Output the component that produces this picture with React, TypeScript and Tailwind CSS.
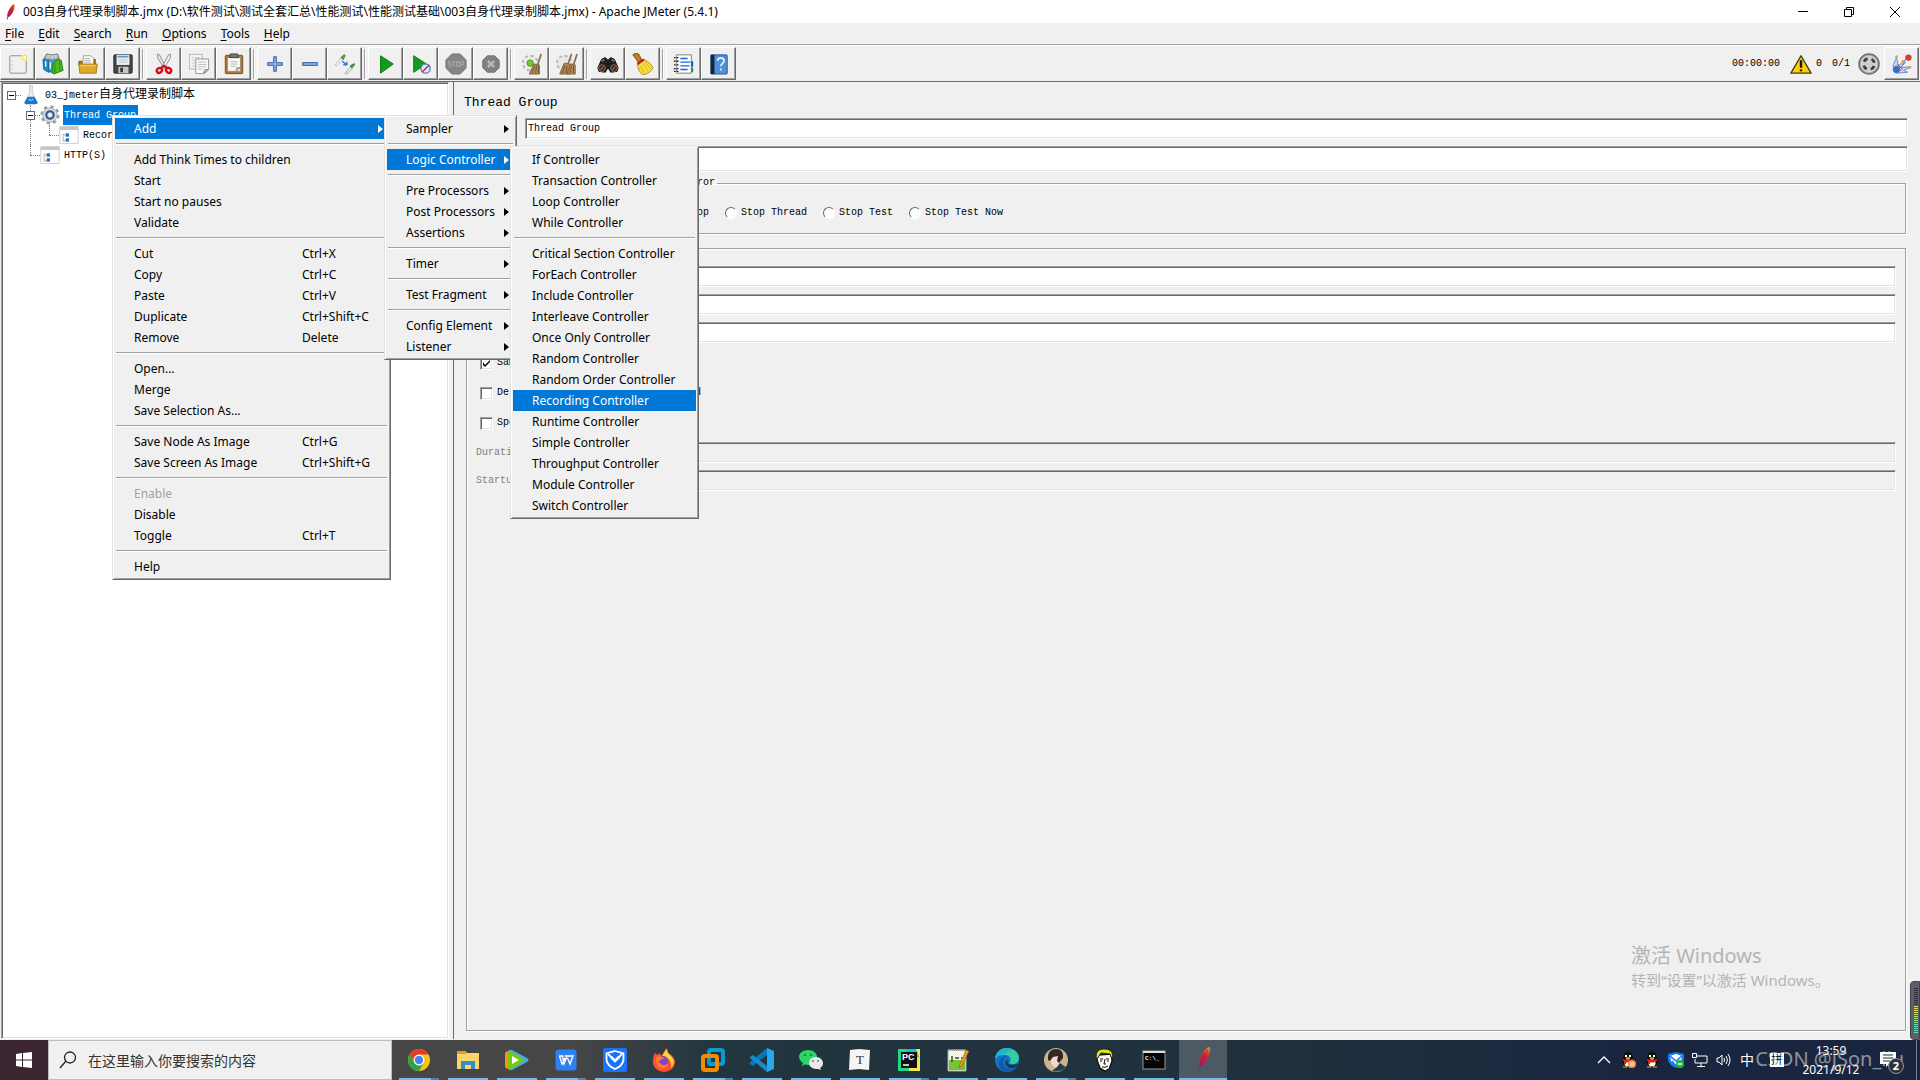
import React from 'react';
import clsx from 'clsx';

const UI_FONT = "font-['Noto_Sans','Noto_Sans_CJK_SC',sans-serif]";
const MONO_FONT = "font-['Liberation_Mono','Noto_Sans_CJK_SC',monospace]";

const POPUP =
  'border border-t-[#e3e3e3] border-l-[#e3e3e3] border-r-[#696969] border-b-[#696969] bg-[#f0f0f0] shadow-[inset_1px_1px_0_#fff,inset_-1px_-1px_0_#a0a0a0]';
const RAISED =
  'border border-t-white border-l-white border-r-[#696969] border-b-[#696969] bg-[#f0f0f0] shadow-[inset_-1px_-1px_0_#a0a0a0]';
const SUNKEN =
  'border border-t-[#a0a0a0] border-l-[#a0a0a0] border-r-white border-b-white shadow-[inset_1px_1px_0_#696969,inset_-1px_-1px_0_#e3e3e3]';

/* ---------- Icons ---------- */

type IconProps = { className?: string; children: React.ReactNode; box?: number };

const Svg = ({ className = 'size-6', box = 24, children }: IconProps) => (
  <svg className={clsx('shrink-0', className)} viewBox={`0 0 ${box} ${box}`} fill="none" aria-hidden="true">
    {children}
  </svg>
);

const Feather = ({ className }: { className?: string }) => (
  <Svg className={className}>
    <defs>
      <linearGradient id="feather" x1="19" y1="0" x2="8" y2="24" gradientUnits="userSpaceOnUse">
        <stop stopColor="#f79a23" />
        <stop offset=".35" stopColor="#d9222a" />
        <stop offset=".7" stopColor="#b11f5b" />
        <stop offset="1" stopColor="#672c8e" />
      </linearGradient>
    </defs>
    <path d="M18 0c2 1 1 5 0 8-1 4-4 9-7 11l-2 1-1 4-1-1 1-4c-1-3 1-8 4-13 2-3 4-6 6-6Z" fill="url(#feather)" />
    <path d="M17 2 9 19" stroke="#8c1d3f" strokeWidth=".6" />
  </Svg>
);

const icons: Record<string, React.ReactNode> = {
  new: (
    <>
      <rect x="3" y="3" width="18" height="19" rx="1" fill="#f0f0ee" stroke="#8a8c88" />
      <path d="M5.500 8v1M5.500 12v1M5.500 17v1" stroke="#999" />
      <circle cx="19" cy="5" r="4" fill="#fdf39a" opacity=".8" />
      <circle cx="19" cy="5" r="2.300" fill="#fff" stroke="#eadb45" />
    </>
  ),
  templates: (
    <>
      <path d="M1 7 7 5l4 2v13l-4 1-5-3Z" fill="#1c90c8" stroke="#0c6390" />
      <path d="m7 7 5-3 6 2v10l-6 6-5-3Z" fill="#3da2d0" stroke="#11688f" />
      <path d="m2 6 3-5 6 1 6-1 2 5-8 2Z" fill="#b5babb" stroke="#73797b" />
      <path d="m6 5 2-3M11 6l1-4M15 5V2" stroke="#eceeee" />
      <path d="m12 11 6-4 3 1 2 11-10 4-2-2Z" fill="#47bb22" stroke="#237d0c" />
      <path d="M14 11v11M19 8l1 12" stroke="#2a8f12" />
      <path d="M4 9v6M9 10v7" stroke="#e8f6fc" strokeWidth="1.500" />
    </>
  ),
  open: (
    <>
      <path d="M2 9h5l2-2h11v6H2Z" fill="#a97710" stroke="#875c07" />
      <path d="M7 3h8l3 3v9H6Z" fill="#fff" stroke="#9a9a9a" />
      <path d="M8 6h6M8 8h7M8 10h7" stroke="#aaa" />
      <path d="M2 12h20l-1 10H3Z" fill="#dfa72d" stroke="#a77b16" />
      <path d="M4 14h16" stroke="#f8d77a" />
    </>
  ),
  save: (
    <>
      <rect x="2" y="2" width="20" height="20" rx="1" fill="#424548" stroke="#25282b" />
      <rect x="5" y="2" width="14" height="11" fill="#eef3f8" />
      <path d="M6 4h12" stroke="#6195d4" strokeWidth="2" />
      <path d="M7 7.500h10M7 10h10" stroke="#aeb7c1" />
      <rect x="7" y="15" width="11" height="7" fill="#c5c6c5" />
      <rect x="9" y="16" width="3" height="5" fill="#34373a" />
    </>
  ),
  cut: (
    <>
      <path d="m5 1 2 1 7 13-2 2L5 5Z" fill="#e5e6e5" stroke="#858785" />
      <path d="m19 1-2 1-7 13 2 2 7-12Z" fill="#f3f3f2" stroke="#858785" />
      <ellipse cx="7" cy="19" rx="3" ry="2.500" stroke="#d40c17" strokeWidth="2.600" transform="rotate(-35 7 19)" />
      <ellipse cx="17" cy="19" rx="3" ry="2.500" stroke="#d40c17" strokeWidth="2.600" transform="rotate(35 17 19)" />
      <path d="m9 16 3-2 3 2" stroke="#d40c17" strokeWidth="2.500" />
    </>
  ),
  copy: (
    <>
      <rect x="1.500" y="1.500" width="14" height="16" fill="#f4f4f2" stroke="#b5b7b3" />
      <path d="M4 5h9M4 8h4M4 11h4M4 14h4" stroke="#c9cac7" />
      <path d="M8.500 6.500h14v12l-5 4h-9Z" fill="#fafaf9" stroke="#8c8e8a" />
      <path d="M11 10h9M11 12.500h9M11 15h9M11 17.500h5" stroke="#b5b7b3" />
      <path d="m17 22 1-4 4 0Z" fill="#d5d6d3" stroke="#8c8e8a" />
    </>
  ),
  paste: (
    <>
      <rect x="2.500" y="2.500" width="19" height="20" rx="1" fill="#b1762a" stroke="#7b4b0d" />
      <rect x="5" y="5" width="14" height="15" fill="#f8f8f6" stroke="#8e8f8b" />
      <path d="M8 1h8l1 4H7Z" fill="#73756f" stroke="#3e403c" />
      <path d="M8 9.500h8M8 12h8M8 14.500h6" stroke="#b5b7b3" />
      <path d="m14 20 1-4h4Z" fill="#cacbc7" stroke="#8e8f8b" />
    </>
  ),
  plus: <path d="M10.500 4h3v6.500H20v3h-6.500V20h-3v-6.500H4v-3h6.500Z" fill="#86b0e2" stroke="#2c5fa8" />,
  minus: <rect x="4" y="10.500" width="16" height="3" fill="#86b0e2" stroke="#2c5fa8" />,
  toggle: (
    <>
      <path d="m1 13 7-8 2 2-7 7Z" fill="#f3f5f2" stroke="#b4b8b1" />
      <path d="m7 5 4-4 2 2-3 5Z" fill="#5a9156" />
      <path d="m12 22 7-8 2 2-7 7Z" fill="#eef0ec" stroke="#9da39a" />
      <path d="m17 14 5-3 1 2-4 4Z" fill="#4c8548" />
      <path d="m9 9 5 4m0-3.500V13h-4" stroke="#2671dd" strokeWidth="1.500" />
    </>
  ),
  start: <path d="m6 3 14 9-14 10Z" fill="#139c1c" stroke="#087510" />,
  startNoPause: (
    <>
      <path d="m4 3 14 9L4 21Z" fill="#139c1c" stroke="#087510" />
      <circle cx="17" cy="17" r="5" fill="#dce9f8" stroke="#5786bf" strokeWidth="1.500" />
      <path d="m13 21 8-8" stroke="#d52424" strokeWidth="1.500" />
    </>
  ),
  stop: (
    <>
      <path d="M7.500 1h9L23 7.500v9L16.500 23h-9L1 16.500v-9Z" fill="#858585" stroke="#777" />
      <path
        d="M6.500 9.500H4V12h2.500v2.500H4M7.500 9.500h4M9.500 9.500v5.500M12.500 9.500h3v5h-3ZM17.500 15V9.500H20v3h-2.500"
        stroke="#a8a8a8"
        strokeWidth="1.200"
      />
    </>
  ),
  shutdown: (
    <>
      <path d="M8 3h8l5 5v8l-5 5H8l-5-5V8Z" fill="#808080" stroke="#737373" />
      <path d="m8.500 8.500 7 7m0-7-7 7" stroke="#b9b9b9" strokeWidth="2.600" />
    </>
  ),
  clear: (
    <>
      <circle cx="10" cy="11" r="7.500" fill="#f0f0ef" stroke="#b5b7b5" strokeWidth="3" strokeDasharray="3.500 2.390" />
      <circle cx="10" cy="11" r="7" fill="#ececeb" />
      <circle cx="10" cy="11" r="3.500" fill="#74c52b" stroke="#4e9319" />
      <path d="m22 1-4 12" stroke="#8d7456" strokeWidth="2" />
      <path d="m14 12 6 1v10H9Z" fill="#b48b58" stroke="#80603b" />
      <path d="m15 14-3 8m5-8-1 8m3-8v8" stroke="#6e5131" />
    </>
  ),
  clearAll: (
    <>
      <circle cx="9" cy="11" r="7.500" fill="#ededec" stroke="#b8b9b8" strokeWidth="3" strokeDasharray="3.500 2.390" />
      <circle cx="9" cy="11" r="7" fill="#e9e9e8" />
      <path d="m17 1-4 11M23 1l-4 12" stroke="#8d7456" strokeWidth="2" />
      <path d="m9 11 6 1v11H4Z" fill="#ae8654" stroke="#80603b" />
      <path d="m16 12 5 1v10h-9Z" fill="#b48b58" stroke="#80603b" />
      <path d="m10 13-3 9m5-8-1 8m6-8-2 8m4-8v8" stroke="#6e5131" />
    </>
  ),
  search: (
    <>
      <path d="m1 16 4-9 4-2 3 3 3-3 4 2 4 9-1 4-7 1-3-5-3 5-7-1Z" fill="#202022" stroke="#09090a" />
      <path d="m5 9 3-2M16 7l3 2" stroke="#777" strokeWidth="2" />
      <circle cx="5.500" cy="16.500" r="3.700" fill="#5b2816" stroke="#747474" />
      <circle cx="18.500" cy="16.500" r="3.700" fill="#5b2816" stroke="#747474" />
      <path d="m4 18 3-3M17 18l3-3" stroke="#da7546" />
    </>
  ),
  broom: (
    <>
      <path d="m1 2 3-2 3 1 4 7-4 2Z" fill="#ba8228" stroke="#704400" />
      <path d="m6 11 7-4q7 3 10 9-3 6-11 8-6-4-6-13Z" fill="#f7df42" stroke="#aa8d12" />
      <path d="m6 12 7-5" stroke="#cf1717" strokeWidth="2.500" />
      <path d="m9 14 5 8M12 12l6 8M14 10l7 8" stroke="#d1ae18" />
    </>
  ),
  functions: (
    <>
      <path d="M4 2h16v20H4Z" fill="#fff" stroke="#777" />
      <path d="M1 5h5M1 9h5M1 13h5M1 17h5M1 20h5" stroke="#292929" strokeWidth="1.500" strokeDasharray="2 1" />
      <path d="M8 6h8M8 10h11M8 14h10M8 18h8" stroke="#1763e5" strokeWidth="1.500" />
      <path d="M21 9v6" stroke="#1254bd" strokeWidth="2" />
      <path d="M21 16v5" stroke="#15942e" strokeWidth="2" />
    </>
  ),
  help: (
    <>
      <rect x="3" y="2" width="18" height="21" rx="1" fill="#4f8fdd" stroke="#345987" />
      <path d="M3 2h4v21H3Z" fill="#1a2636" />
      <path d="M10.500 8.500c0-4 7-4 7 0 0 3-3.500 3-3.500 6m0 2.500v2" stroke="#fff" strokeWidth="1.600" />
    </>
  ),
  remote: (
    <>
      <path d="M2 14 6 5l2 9 8-7-5 9 11-1-8 4 4 2-12 1Z" fill="#c9daf5" stroke="#5f88d3" />
      <path d="m3 17 8 2M7 12l6 7M9 17l7-7" stroke="#de3544" />
      <circle cx="6" cy="18" r="4" fill="#396cc3" stroke="#8fb2ee" strokeDasharray="1 1" />
      <circle cx="19" cy="5" r="3.500" fill="#d73c31" />
      <circle cx="6" cy="4" r="1.500" fill="#ef9d25" />
      <circle cx="20" cy="16" r="1.500" fill="#ef9d25" />
      <circle cx="13" cy="9" r="1.500" fill="#ef9d25" />
    </>
  ),
  target: (
    <>
      <circle cx="12" cy="12" r="11" fill="#a8a8a8" stroke="#696969" strokeWidth="1.500" />
      <circle cx="12" cy="12" r="8.500" fill="#cfcfcf" stroke="#dedede" />
      <circle
        cx="12"
        cy="12"
        r="6"
        stroke="#3d3d3d"
        strokeWidth="3"
        strokeDasharray="5 4.425"
        transform="rotate(21 12 12)"
      />
    </>
  ),
  warning: (
    <>
      <path d="M12 3 23 22H1Z" fill="#f8cf0c" stroke="#463b0c" strokeWidth="1.500" strokeLinejoin="round" />
      <path d="M12 8v8M12 18v2" stroke="#171717" strokeWidth="2.600" />
    </>
  ),
  plan: (
    <>
      <path d="M10.500 0h3v9l5 11q1 2-1 2h-11q-2 0-1-2l5-11Z" fill="#eef3f8" stroke="#b3bac1" />
      <path d="M8 14h8l4 7q0 2-2 2H6q-2 0-2-2Z" fill="#1d74c9" />
      <path d="M9 17q3 3 6 0" stroke="#71b7ef" strokeWidth="2" />
    </>
  ),
  gear: (
    <>
      <circle cx="12" cy="12" r="10" stroke="#9a9d9f" strokeWidth="3" strokeDasharray="4 3.854" />
      <circle cx="12" cy="12" r="8.500" fill="#dfe1e2" stroke="#9a9d9f" />
      <circle cx="12" cy="12" r="4.500" fill="#bbd2ee" stroke="#35578a" strokeWidth="2.500" />
      <circle cx="12" cy="12" r="1.800" fill="#fff" />
    </>
  ),
  node: (
    <>
      <rect x="1" y="2" width="22" height="20" fill="#fff" stroke="#c5c7c9" />
      <path d="M1 2h22v4H1Z" fill="#c4c6c8" />
      <path d="M5 10v10M5 12h4M5 19h4" stroke="#aaa" />
      <rect x="8" y="10" width="4" height="4" fill="#2a70cb" />
      <rect x="8" y="16" width="4" height="4" fill="#2a70cb" />
    </>
  ),
};

const Icon = ({ name, className }: { name: string; className?: string }) => <Svg className={className}>{icons[name]}</Svg>;

/* ---------- Window chrome ---------- */

const TitleBar = () => (
  <header className={clsx('flex h-[23px] shrink-0 items-center bg-white pr-0.5 pl-0.5 text-xs text-black', UI_FONT)}>
    <Feather className="size-4" />
    <h1 className="ml-[5px] grow whitespace-nowrap">
      003自身代理录制脚本.jmx (D:\软件测试\测试全套汇总\性能测试\性能测试基础\003自身代理录制脚本.jmx) - Apache JMeter (5.4.1)
    </h1>
    <button type="button" aria-label="Minimize" className="flex h-full w-[46px] items-center justify-center">
      <Svg className="size-3" box={12}><path d="M1 5.500h10" stroke="#000" /></Svg>
    </button>
    <button type="button" aria-label="Restore" className="flex h-full w-[46px] items-center justify-center">
      <Svg className="size-3" box={12}><path d="M1.500 3.500h7v7h-7ZM3.500 3V1.500h7v7H9" stroke="#000" /></Svg>
    </button>
    <button type="button" aria-label="Close" className="flex h-full w-[46px] items-center justify-center">
      <Svg className="size-3" box={12}><path d="m1 1 10 10M11 1 1 11" stroke="#000" /></Svg>
    </button>
  </header>
);

const MenuBar = () => (
  <nav className={clsx('flex h-[22px] shrink-0 items-center gap-[14px] border-b border-[#a0a0a0] pl-[5px] text-xs', UI_FONT)}>
    {['File', 'Edit', 'Search', 'Run', 'Options', 'Tools', 'Help'].map((item) => (
      <button key={item} type="button">
        <span className="underline underline-offset-2">{item[0]}</span>
        {item.slice(1)}
      </button>
    ))}
  </nav>
);

const toolGroups = [
  ['new', 'templates', 'open', 'save'],
  ['cut', 'copy', 'paste'],
  ['plus', 'minus', 'toggle'],
  ['start', 'startNoPause', 'stop', 'shutdown'],
  ['clear', 'clearAll'],
  ['search', 'broom'],
  ['functions', 'help'],
];

const ToolButton = ({ name }: { name: string }) => (
  <button type="button" aria-label={name} className={clsx('flex h-[33px] w-[35px] items-center justify-center', RAISED)}>
    <Icon name={name} className="size-[22px]" />
  </button>
);

const Toolbar = () => (
  <div className="flex h-[37px] shrink-0 items-start border-t border-b border-t-white border-b-[#696969] pt-px pr-px">
    {toolGroups.map((group, idx) => (
      <React.Fragment key={group[0]}>
        {idx > 0 && <span className="mx-0.5 mt-0.5 h-[30px] w-0.5 border-l border-[#a0a0a0] bg-white" />}
        {group.map((name) => (
          <ToolButton key={name} name={name} />
        ))}
      </React.Fragment>
    ))}
    <div className={clsx('ml-auto flex items-center text-[10px]', MONO_FONT)}>
      <span className="mr-2.5">00:00:00</span>
      <Icon name="warning" className="size-[22px]" />
      <span className="mr-2.5 ml-1">0</span>
      <span className="mr-2">0/1</span>
      <Icon name="target" className="mr-1 size-[22px]" />
      <ToolButton name="remote" />
    </div>
  </div>
);

/* ---------- Test plan tree ---------- */

const Expander = () => (
  <span className="relative z-10 flex size-[9px] items-center justify-center border border-[#696969] bg-white">
    <span className="h-px w-[5px] bg-black" />
  </span>
);

type TreeRowProps = {
  depth: number;
  icon: string;
  open?: boolean;
  trunk?: boolean;
  selected?: boolean;
  children: React.ReactNode;
};

const TreeRow = ({ depth, icon, open, trunk, selected, children }: TreeRowProps) => (
  <li className="flex h-5 items-center">
    {Array.from({ length: depth }, (_, level) => (
      <span key={level} className="flex h-full w-[19px] justify-center">
        {trunk && level === 1 && <span className="w-px border-l border-dotted border-[#808080]" />}
      </span>
    ))}
    <span className="relative flex h-full w-[19px] items-center justify-center">
      {depth > 0 && (
        <span
          className={clsx('absolute top-0 left-[9px] border-l border-dotted border-[#808080]', open ? 'h-full' : 'h-1/2')}
        />
      )}
      <span className="absolute top-[10px] right-0 left-[9px] border-t border-dotted border-[#808080]" />
      {open && <Expander />}
    </span>
    <Icon name={icon} className="size-5" />
    <span
      className={clsx(
        'ml-[3px] flex h-5 items-center pr-0.5 pl-px whitespace-nowrap',
        selected && 'bg-[#0078d7] text-white',
      )}
    >
      {children}
    </span>
  </li>
);

const TestTree = () => (
  <aside className={clsx('ml-px w-[448px] shrink-0 overflow-hidden bg-white pt-0.5 text-[10px]', SUNKEN, MONO_FONT)}>
    <ul>
      <TreeRow depth={0} icon="plan" open>
        03_jmeter<span className="text-xs">自身代理录制脚本</span>
      </TreeRow>
      <TreeRow depth={1} icon="gear" open selected>Thread Group</TreeRow>
      <TreeRow depth={2} icon="node" trunk>Recording Controller</TreeRow>
      <TreeRow depth={1} icon="node">HTTP(S) Test Script Recorder</TreeRow>
    </ul>
  </aside>
);

/* ---------- Thread group form ---------- */

type FieldProps = { id: string; label: string; value?: string; tall?: boolean; disabled?: boolean };

const Field = ({ id, label, value = '', tall, disabled }: FieldProps) => (
  <div className="flex items-center gap-1">
    <label htmlFor={id} className={clsx('shrink-0', disabled && 'text-[#808080]')}>{label}</label>
    <input
      id={id}
      defaultValue={value}
      disabled={disabled}
      className={clsx('min-w-0 grow px-0.5', SUNKEN, tall ? 'h-[26px]' : 'h-[21px]', disabled ? 'bg-[#f0f0f0]' : 'bg-white')}
    />
  </div>
);

const Check = ({ label, checked }: { label: string; checked?: boolean }) => (
  <label className="flex h-[30px] items-center gap-1 pl-1">
    <span className="relative size-[13px]">
      <input type="checkbox" defaultChecked={checked} className={clsx('peer block size-[13px] appearance-none bg-white', SUNKEN)} />
      <Svg className="absolute inset-0 hidden size-[13px] peer-checked:block" box={13}>
        <path d="m3 5 2 3 5-5v2L5 10 3 8Z" fill="#000" />
      </Svg>
    </span>
    {label}
  </label>
);

const Radio = ({ label, checked }: { label: string; checked?: boolean }) => (
  <label className="flex items-center gap-1">
    <input
      type="radio"
      name="on-error"
      defaultChecked={checked}
      className="size-3 appearance-none rounded-full border border-t-[#696969] border-r-white border-b-white border-l-[#696969] bg-white checked:bg-black"
    />
    {label}
  </label>
);

const GROUP = 'border border-[#a0a0a0] shadow-[1px_1px_0_#fff,inset_1px_1px_0_#fff]';

const ThreadGroupPanel = () => (
  <main className={clsx('ml-1 flex min-w-0 grow flex-col border-l border-[#696969] pr-3 pl-2.5 text-[10px] leading-3', MONO_FONT)}>
    <h2 className="pt-[11px] text-[13px] leading-5">Thread Group</h2>
    <div className="mt-[5px] flex flex-col gap-[7px]">
      <div className="[&_label]:w-[57px]"><Field id="name" label="Name:" value="Thread Group" /></div>
      <div className="[&_label]:w-[57px]"><Field id="comments" label="Comments:" tall /></div>
    </div>
    <fieldset className={clsx('mt-[5px] mr-0.5 ml-0.5 h-[57px] px-3.5', GROUP)}>
      <legend className="-ml-2 px-0.5">Action to be taken after a Sampler error</legend>
      <div className="flex gap-4 pt-[18px]">
        <Radio label="Continue" checked />
        <Radio label="Start Next Thread Loop" />
        <Radio label="Stop Thread" />
        <Radio label="Stop Test" />
        <Radio label="Stop Test Now" />
      </div>
    </fieldset>
    <fieldset className={clsx('mt-2 mr-0.5 mb-2 ml-0.5 grow px-[9px]', GROUP)}>
      <legend className="-ml-1 px-0.5">Thread Properties</legend>
      <div className="flex flex-col gap-[7px] pt-3">
        <Field id="threads" label="Number of Threads (users):" value="1" />
        <Field id="ramp" label="Ramp-up period (seconds):" value="1" />
        <Field id="loops" label="Loop Count:" value="1" />
      </div>
      <div className="pt-[5px] pb-1">
        <Check label="Same user on each iteration" checked />
        <Check label="Delay Thread creation until needed" />
        <Check label="Specify Thread lifetime" />
      </div>
      <div className="flex flex-col gap-[7px]">
        <Field id="duration" label="Duration (seconds):" disabled />
        <Field id="delay" label="Startup delay (seconds):" disabled />
      </div>
    </fieldset>
  </main>
);

/* ---------- Popup menus ---------- */

type Item = { label: string; keys?: string; sub?: boolean; active?: boolean; disabled?: boolean };

const contextMenu: Item[][] = [
  [{ label: 'Add', sub: true, active: true }],
  [{ label: 'Add Think Times to children' }, { label: 'Start' }, { label: 'Start no pauses' }, { label: 'Validate' }],
  [
    { label: 'Cut', keys: 'Ctrl+X' },
    { label: 'Copy', keys: 'Ctrl+C' },
    { label: 'Paste', keys: 'Ctrl+V' },
    { label: 'Duplicate', keys: 'Ctrl+Shift+C' },
    { label: 'Remove', keys: 'Delete' },
  ],
  [{ label: 'Open...' }, { label: 'Merge' }, { label: 'Save Selection As...' }],
  [{ label: 'Save Node As Image', keys: 'Ctrl+G' }, { label: 'Save Screen As Image', keys: 'Ctrl+Shift+G' }],
  [{ label: 'Enable', disabled: true }, { label: 'Disable' }, { label: 'Toggle', keys: 'Ctrl+T' }],
  [{ label: 'Help' }],
];

const addMenu: Item[][] = [
  [{ label: 'Sampler', sub: true }],
  [{ label: 'Logic Controller', sub: true, active: true }],
  [{ label: 'Pre Processors', sub: true }, { label: 'Post Processors', sub: true }, { label: 'Assertions', sub: true }],
  [{ label: 'Timer', sub: true }],
  [{ label: 'Test Fragment', sub: true }],
  [{ label: 'Config Element', sub: true }, { label: 'Listener', sub: true }],
];

const controllerMenu: Item[][] = [
  [{ label: 'If Controller' }, { label: 'Transaction Controller' }, { label: 'Loop Controller' }, { label: 'While Controller' }],
  [
    { label: 'Critical Section Controller' },
    { label: 'ForEach Controller' },
    { label: 'Include Controller' },
    { label: 'Interleave Controller' },
    { label: 'Once Only Controller' },
    { label: 'Random Controller' },
    { label: 'Random Order Controller' },
    { label: 'Recording Controller', active: true },
    { label: 'Runtime Controller' },
    { label: 'Simple Controller' },
    { label: 'Throughput Controller' },
    { label: 'Module Controller' },
    { label: 'Switch Controller' },
  ],
];

const PopupMenu = ({ groups, className }: { groups: Item[][]; className: string }) => (
  <div role="menu" className={clsx('absolute p-0.5 text-xs', POPUP, UI_FONT, className)}>
    {groups.map((group, idx) => (
      <React.Fragment key={group[0].label}>
        {idx > 0 && <div className="mx-px my-1 h-0.5 border-t border-[#a0a0a0] bg-white" />}
        {group.map((item) => (
          <button
            key={item.label}
            type="button"
            role="menuitem"
            disabled={item.disabled}
            className={clsx(
              'flex h-[21px] w-full items-center pl-[19px] text-left whitespace-nowrap',
              item.active && 'bg-[#0078d7] text-white',
              item.disabled && 'text-[#a0a0a0]',
            )}
          >
            <span className="grow">{item.label}</span>
            {item.keys && <span className="w-[86px]">{item.keys}</span>}
            {item.sub && (
              <svg className="mr-[5px] h-2 w-[5px]" viewBox="0 0 5 8" fill="currentColor" aria-hidden="true">
                <path d="m0 0 5 4-5 4Z" />
              </svg>
            )}
          </button>
        ))}
      </React.Fragment>
    ))}
  </div>
);

/* ---------- Taskbar ---------- */

const apps: { name: string; stacked?: boolean; art: React.ReactNode }[] = [
  {
    name: 'Chrome',
    stacked: true,
    art: (
      <>
        <circle cx="12" cy="12" r="11" fill="#fbc116" />
        <path d="M2.500 6.500A11 11 0 0 1 21.500 6.500H12a5.500 5.500 0 0 0-4.800 8.200Z" fill="#e33b2e" />
        <path d="M2.500 6.500A11 11 0 0 0 12 23l4.800-8.300a5.500 5.500 0 0 1-9.600 0Z" fill="#2ba24c" />
        <circle cx="12" cy="12" r="5.400" fill="#fff" />
        <circle cx="12" cy="12" r="4.200" fill="#4285f4" />
      </>
    ),
  },
  {
    name: 'Explorer',
    art: (
      <>
        <path d="M1 3h8l2 2h12v16H1Z" fill="#fbd565" />
        <path d="M1 3h8l1 3H1Z" fill="#dd9d20" />
        <path d="M5 13h14v8h-4v-4H9v4H5Z" fill="#318fd1" />
      </>
    ),
  },
  {
    name: 'Video',
    art: (
      <>
        <path d="M3 4q0-3 4-2l15 8q3 2 0 4L7 22q-4 1-4-2Z" fill="#45aee8" />
        <path d="M0 6q0-3 4-3v18q-4 0-4-3Z" fill="#f7941e" />
        <path d="M3 5q2-2 5 0l9 5q3 2 0 4l-9 6q-4 2-5-1Z" fill="#78c90b" />
        <path d="m7 8 7 4-7 4Z" fill="#fff" />
      </>
    ),
  },
  {
    name: 'WPS',
    stacked: true,
    art: (
      <>
        <rect x="1.500" y="1.500" width="21" height="21" rx="3" fill="#2c80ef" />
        <path d="M5 8h3.500l1.500 8 3-8h-2.500M5.500 8 8 16l3-6M13 8h6l-3 8-2.500-6" stroke="#fff" strokeWidth="1.400" />
      </>
    ),
  },
  {
    name: 'PC Manager',
    art: (
      <>
        <rect width="24" height="24" rx="2" fill="#1a73fb" />
        <path d="m12 3 8.500 2.500V12q-1 6-8.500 9-7.500-3-8.500-9V5.500Z" stroke="#fff" strokeWidth="1.800" />
        <path d="m5 6 7 7 7-7" stroke="#fff" strokeWidth="1.800" />
        <path d="m8 9 4 4 4-4" stroke="#fff" strokeWidth="2.600" />
      </>
    ),
  },
  {
    name: 'Firefox',
    art: (
      <>
        <path d="M3 5q1 0 2 2l3-2q0 2 2 3 2-6 5-8 0 4 3 6 5 4 5 8a11 10 0 0 1-22 0q0-6 2-9Z" fill="#ff4f36" />
        <path d="M15 1q0 4 3 6 7 7 1 13 1-8-5-11l-4-1q3-5 5-7Z" fill="#ffd43a" />
        <circle cx="11" cy="13" r="5" fill="#8041ce" />
        <path d="M4 9q5-2 9 2-4-1-6 3 3 5 9 2-3 7-9 3-4-4-3-10Z" fill="#ff7b24" />
      </>
    ),
  },
  {
    name: 'VMware',
    stacked: true,
    art: (
      <>
        <rect x="8" y="2" width="14" height="14" rx="2" stroke="#079ad4" strokeWidth="4" />
        <rect x="2" y="8" width="14" height="14" rx="2" stroke="#f38b00" strokeWidth="4" />
        <path d="M8 12v2q0 2 2 2h4" stroke="#079ad4" strokeWidth="4" />
      </>
    ),
  },
  {
    name: 'VS Code',
    art: (
      <>
        <path d="m17 0 7 3v18l-7 3Z" fill="#2aa6f0" />
        <path d="M17 0v7L3 18l-3-2v-2Z" fill="#0877b9" />
        <path d="m0 9 3-2 14 11v6L0 10Z" fill="#1689d1" />
      </>
    ),
  },
  {
    name: 'WeChat',
    art: (
      <>
        <path d="M9 2c5 0 9 3 9 7s-4 8-9 8l-3-.500L3 18l1-3Q0 12 0 9c0-4 4-7 9-7Z" fill="#2ad465" />
        <path d="M17 9c4 0 7 3 7 6 0 2-1 4-3 5l1 2-3-1c-5 0-9-2-9-6s3-6 7-6Z" fill="#e9e9e9" />
        <path d="M6 6v2M12 6v2" stroke="#176a36" strokeWidth="1.500" />
        <path d="M14 12v2M19 12v2" stroke="#777" strokeWidth="1.500" />
      </>
    ),
  },
  {
    name: 'Typora',
    art: (
      <>
        <path d="m2 2 9-1 11 1-1 20-10-1-10 1Z" fill="#f5f5f3" />
        <text x="12" y="16" textAnchor="middle" fontSize="13" fontFamily="Liberation Serif" fill="#333">T</text>
      </>
    ),
  },
  {
    name: 'PyCharm',
    stacked: true,
    art: (
      <>
        <path d="M1 1h14v22H1Z" fill="#21d789" />
        <path d="M12 1h11v22H12Z" fill="#f3e84c" />
        <path d="M9 1h10l3 8-8 4Z" fill="#15bfe0" />
        <rect x="4" y="4" width="16" height="16" fill="#111" />
        <text x="5" y="12" fontSize="9" fontWeight="700" fontFamily="Liberation Sans" fill="#fff">PC</text>
        <path d="M6 17h6" stroke="#fff" strokeWidth="1.500" />
      </>
    ),
  },
  {
    name: 'Notepad++',
    art: (
      <>
        <path d="M2 2h18v21H2Z" fill="#f6f6e8" stroke="#a4a4a4" />
        <path d="M3 12h16v10H3Z" fill="#75c533" />
        <path d="M2 2h18" stroke="#999" strokeWidth="2" strokeDasharray="1 1" />
        <path d="M6 8v6M9 10h4M15 10h3" stroke="#394d20" strokeWidth="1.500" />
        <path d="m20 2 3 1-7 15-3 2 1-4Z" fill="#ec9e27" stroke="#8a5315" strokeWidth=".6" />
      </>
    ),
  },
  {
    name: 'Edge',
    art: (
      <>
        <circle cx="12" cy="12" r="12" fill="#0d76ca" />
        <path d="M0 11C1 4 6 0 12 0c7 0 12 5 12 10 0 4-3 6-7 6-2 0-3-1-2-2 2-4-1-7-5-7-5 0-9 1-10 4Z" fill="#38cba5" />
        <path d="M0 11C1 4 5 0 12 0c3 0 5 1 7 2-5 0-7 2-10 5-5 0-8 2-9 4Z" fill="#22b2d6" />
        <path d="M12 8c-4 2-5 6-3 10 2 3 7 4 12 2-4 6-15 5-17-3-1-5 3-9 8-9Z" fill="#1458ad" />
        <path d="M13 11c-2 3 0 6 4 6l6-1q-1 3-4 4-5 1-8-3-2-4 2-6Z" fill="#22363f" />
      </>
    ),
  },
  {
    name: 'Portrait',
    stacked: true,
    art: (
      <>
        <circle cx="12" cy="12" r="12" fill="#c9b58d" />
        <path d="M6 8h9v7l-1 5-4-1-3-4Z" fill="#f3d9c4" />
        <path d="M4 8Q5 1 12 1q8 0 7 9l-4 5-2-2 1-5-5 1-3 4-2-1Z" fill="#352722" />
        <path d="m8 23 5-4 3-4 4 3 2 1q-6 6-14 4Z" fill="#283c48" />
      </>
    ),
  },
  {
    name: 'HeidiSQL',
    art: (
      <>
        <path d="m5 7 13-1 1 7-3 8-4 2-5-3-3-8Z" fill="#f8f8f8" stroke="#111" strokeWidth="1.300" />
        <path d="M3 9Q3 1 10 1q9-1 10 7l-1 3-2-5-9-1-4 6Z" fill="#dfe01e" stroke="#222" />
        <path d="M7 11h3M13 11h3M7 13h2M14 13h2M12 11l-1 5h2M9 19q3 1 6-1" stroke="#111" />
      </>
    ),
  },
  {
    name: 'Command Prompt',
    art: (
      <>
        <rect x="1" y="3" width="22" height="18" fill="#050505" stroke="#999" />
        <path d="M1 4h22" stroke="#ddd" strokeWidth="2" />
        <text x="3" y="12" fontSize="6" fontWeight="700" fontFamily="Liberation Mono" fill="#eee">C:\_</text>
      </>
    ),
  },
];

const Penguin = ({ busy }: { busy?: boolean }) => (
  <Svg className="size-4" box={16}>
    <path d="M8 0c4 0 5 3 5 6l2 6-2-1q-1 4-5 4t-5-4l-2 1 2-6c0-3 1-6 5-6Z" fill="#111" />
    <ellipse cx="8" cy="11" rx="3.500" ry="3.500" fill="#fff" />
    <path d="M5 3h2v2H5ZM9 3h2v2H9Z" fill="#fff" />
    <path d="M3 7q5 2 10 0v2q-5 3-10 0ZM4 9h2v3H4Z" fill="#dd2020" />
    <path d="M6 6h4l-2 1ZM3 15h4M9 15h4" fill="#f6b521" stroke="#f6b521" />
    {busy && (
      <>
        <circle cx="12" cy="12" r="4" fill="#f69145" />
        <path d="M10 11h4M10 13h4" stroke="#fff" />
      </>
    )}
  </Svg>
);

const Tray = () => (
  <div className={clsx('ml-auto flex h-full items-center gap-2 text-white', UI_FONT)}>
    <Svg className="size-4" box={16}><path d="m2 11 6-6 6 6" stroke="#fff" strokeWidth="1.300" /></Svg>
    <Penguin busy />
    <Penguin />
    <Svg className="size-4" box={16}>
      <path d="m8 0 8 2v6q-1 5-8 8-7-3-8-8V2Z" fill="#1877f2" />
      <path d="m2 4 6-2 6 2-1 5-5 5-5-5Z" fill="#fff" />
      <path d="m2 4 6 5 6-5M4 9l4 5" stroke="#1877f2" strokeWidth="1.600" />
      <circle cx="12" cy="12" r="4" fill="#20b83a" />
      <path d="M10 12h4" stroke="#fff" strokeWidth="1.500" />
    </Svg>
    <Svg className="size-4" box={16}>
      <path d="M5 4h10v7H3V7M9 11v3M5 14.500h8M.5 1.500h4v4h-4Z" stroke="#fff" />
    </Svg>
    <Svg className="size-4" box={16}>
      <path d="M1 6h2l3-3v10l-3-3H1ZM8 6q1 2 0 4M10 4q3 4 0 8M12 2q4 6 0 12" stroke="#fff" />
    </Svg>
    <span className="text-sm">中</span>
    <span className="ml-2 flex size-[14px] items-center justify-center bg-white text-xs text-black">拼</span>
    <div className="ml-2 flex w-[62px] flex-col items-center text-xs leading-[19px]">
      <span>13:59</span>
      <span>2021/9/12</span>
    </div>
    <span className="relative ml-2.5 flex w-7 items-center">
      <Svg className="size-4" box={16}>
        <path d="M0 0h16v12H9l-3 3v-3H0Z" fill="#fff" />
        <path d="M3 3h10M3 6h10M3 9h7" stroke="#1c2941" />
      </Svg>
      <span className="absolute top-1.5 left-2 flex size-4 items-center justify-center rounded-full border border-[#8d949c] bg-[#2c333b] text-[11px] font-bold">
        2
      </span>
    </span>
    <span className="h-full w-1 border-l border-[#77808f]" />
  </div>
);

const Taskbar = () => (
  <footer className="relative flex h-10 shrink-0 bg-[linear-gradient(90deg,#464646_0%,#464646_30%,#22363f_37%,#20313d_65%,#1a2640_85%,#1a2640_100%)]">
    <button type="button" aria-label="Start" className="flex w-12 items-center justify-center bg-[#3a2531]">
      <Svg className="size-4" box={16}>
        <path d="m0 2 6-1v6.500H0ZM7 1l9-1v7.500H7ZM0 8.500h6V15l-6-1ZM7 8.500h9V16l-9-1Z" fill="#fff" />
      </Svg>
    </button>
    <label className="flex w-[344px] items-center gap-[11px] border border-[#bdbdbd] bg-[#f0f0f0] pl-2.5">
      <Svg className="size-[18px]" box={18}>
        <circle cx="11" cy="6.500" r="5.500" stroke="#222" strokeWidth="1.300" />
        <path d="m7 10-6 7" stroke="#222" strokeWidth="1.300" />
      </Svg>
      <input
        aria-label="Search"
        placeholder="在这里输入你要搜索的内容"
        className="min-w-0 grow bg-transparent font-['Noto_Sans_CJK_SC',sans-serif] text-sm outline-none placeholder:text-[#333]"
      />
    </label>
    <div className="flex gap-px pl-[3px]">
      {apps.map((app) => (
        <button key={app.name} type="button" aria-label={app.name} className="relative flex w-12 items-center justify-center">
          <Svg>{app.art}</Svg>
          <span className={clsx('absolute bottom-0 left-1 h-0.5 bg-[#76b9ed]', app.stacked ? 'w-8' : 'w-10')} />
          {app.stacked && <span className="absolute right-1 bottom-0 h-0.5 w-2 bg-[#4f82ad]" />}
        </button>
      ))}
      <button type="button" aria-label="JMeter" className="flex w-12 items-center justify-center border-b-2 border-[#76b9ed] bg-[#4d5a64]">
        <Feather className="size-6" />
      </button>
    </div>
    <span className={clsx('absolute right-4 bottom-[7px] text-xl leading-7 whitespace-nowrap text-white/50', UI_FONT)}>
      CSDN @jSon_liu
    </span>
    <Tray />
  </footer>
);

const LevelMeter = () => (
  <div className="absolute right-0 bottom-10 flex h-[59px] w-2.5 flex-col justify-center gap-px rounded-l-sm border border-[#3e424e] bg-[#5b5f6d] pl-[3px]">
    {Array.from({ length: 23 }, (_, bar) => (
      <span
        key={bar}
        className={clsx('h-px w-1', bar < 9 ? 'bg-[#2d303a]' : bar < 13 ? 'bg-[#e2d84b]' : bar < 17 ? 'bg-[#a5df6b]' : 'bg-[#5fe0b0]')}
      />
    ))}
  </div>
);

const App = () => (
  <div className="relative flex h-screen flex-col overflow-hidden bg-[#f0f0f0] text-black">
    <TitleBar />
    <MenuBar />
    <Toolbar />
    <div className="flex min-h-0 grow pb-px">
      <TestTree />
      <ThreadGroupPanel />
    </div>
    <Taskbar />

    <PopupMenu groups={contextMenu} className="top-[115px] left-[112px] w-[279px]" />
    <PopupMenu groups={addMenu} className="top-[115px] left-[384px] w-[133px]" />
    <PopupMenu groups={controllerMenu} className="top-[146px] left-[510px] w-[189px]" />

    <div className={clsx('absolute right-[88px] bottom-[90px] w-[201px] whitespace-nowrap text-[#b4b4b4]', UI_FONT)}>
      <p className="text-xl leading-7">激活 Windows</p>
      <p className="text-[15px] leading-5">转到“设置”以激活 Windows。</p>
    </div>
    <LevelMeter />
  </div>
);

export default App;
